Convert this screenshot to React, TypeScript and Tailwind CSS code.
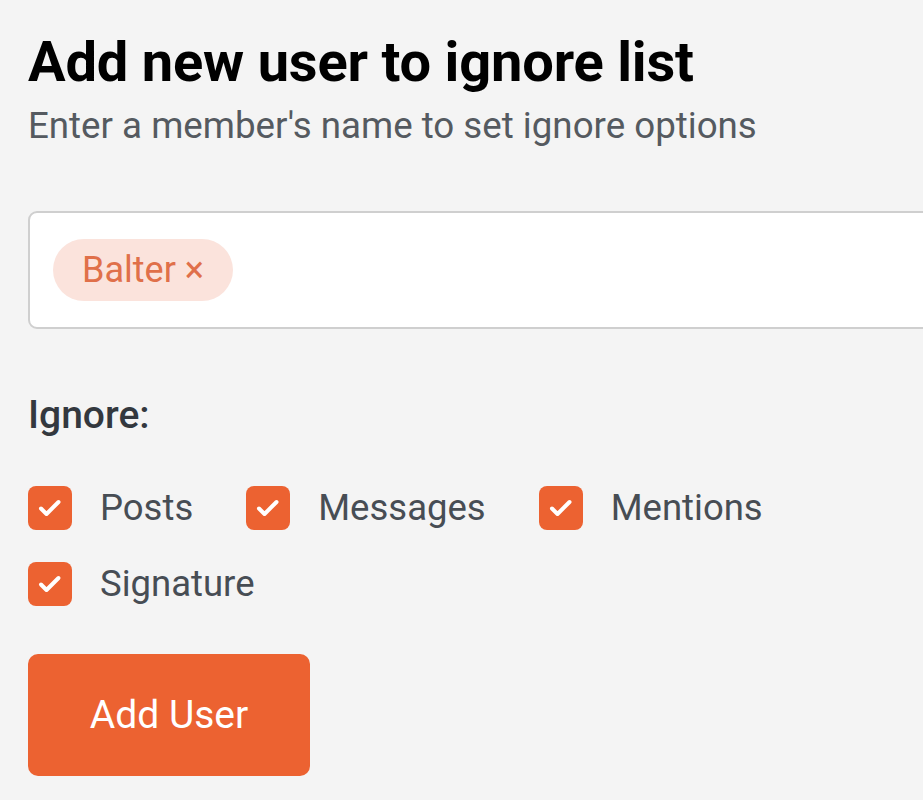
function CheckIcon() {
  return (
    <svg width="44" height="44" viewBox="0 0 44 44" fill="none">
      <path
        d="M13 22.5L18.5 28L30.5 16"
        stroke="white"
        strokeWidth="4"
        strokeLinecap="round"
        strokeLinejoin="round"
      />
    </svg>
  );
}

const options = ["Posts", "Messages", "Mentions", "Signature"];

function Option({ label }: { label: string }) {
  return (
    <label className="flex items-center gap-[28px]">
      <span className="flex h-[44px] w-[44px] items-center justify-center rounded-[8px] bg-[#ec6231]">
        <CheckIcon />
      </span>
      <span className="text-[36.5px] leading-none text-[#474d54]">{label}</span>
    </label>
  );
}

export default function App() {
  return (
    <div className="min-h-screen bg-[#f4f4f4] pl-[28px] pt-[30px] font-['Roboto',sans-serif]">
      <h1 className="text-[56px] font-bold leading-[64px] tracking-[-0.2px] text-black">
        Add new user to ignore list
      </h1>
      <p className="mt-[10px] text-[36.7px] leading-[44px] text-[#555a60]">
        Enter a member's name to set ignore options
      </p>

      <div className="mt-[63px] -mr-[40px] flex h-[118px] items-center rounded-[9px] border-2 border-[#cfcfcf] bg-white px-[23px]">
        <span className="flex h-[62px] items-center rounded-full bg-[#fbe3dc] px-[29px] text-[36px] text-[#e0704a]">
          Balter ×
        </span>
      </div>

      <p className="mt-[64px] text-[39px] font-medium leading-[44px] text-[#33383e]">
        Ignore:
      </p>

      <div className="mt-[49px] flex flex-wrap gap-x-[53px] gap-y-[32px] pr-[120px]">
        {options.map((o) => (
          <Option key={o} label={o} />
        ))}
      </div>

      <button className="mt-[48px] flex h-[122px] w-[282px] items-center justify-center rounded-[10px] bg-[#ec6231] text-[39px] text-white">
        Add User
      </button>
    </div>
  );
}
